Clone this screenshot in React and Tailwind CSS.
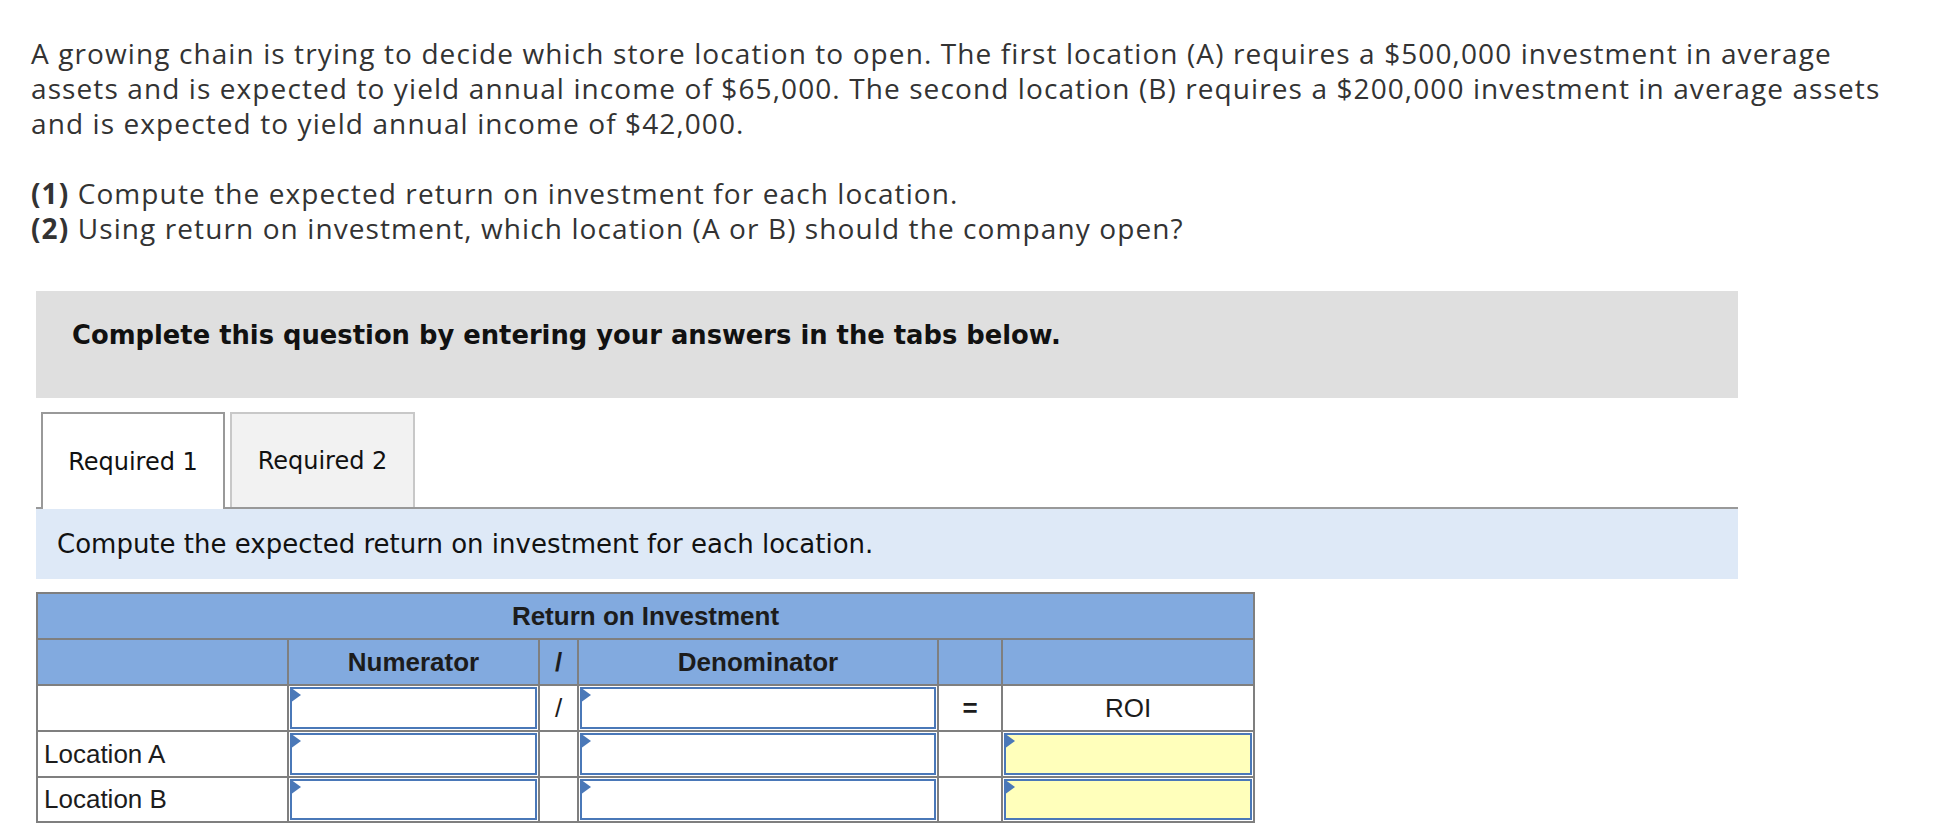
import React from 'react';

function InputBox({ yellow }) {
  return (
    <div className="h-full w-full bg-white p-[1px]">
      <div className={`relative h-full w-full border-2 border-[#4a78b8] ${yellow ? 'bg-[#ffffbb]' : 'bg-white'}`}>
        <div className="absolute -left-[2px] -top-[2px] h-0 w-0 border-y-[8px] border-l-[11px] border-y-transparent border-l-[#4a78b8]" />
      </div>
    </div>
  );
}

function Cell({ children, className = '' }) {
  return <div className={`flex items-center bg-white ${className}`}>{children}</div>;
}

function HeadCell({ children }) {
  return (
    <div className="flex items-center justify-center bg-[#82aadf] font-bold text-[#1c1c1c]">{children}</div>
  );
}

export default function App() {
  const rows = ['Location A', 'Location B'];

  return (
    <div className="min-h-screen bg-white pt-[36px] font-['Liberation_Sans',Arial,sans-serif]">
      <div className="pl-[31px] text-[28px] leading-[35px] tracking-[1.1px] text-[#333333] font-['Open_Sans','Liberation_Sans',sans-serif]">
        <p>
          A growing chain is trying to decide which store location to open. The first location (A) requires a $500,000 investment in average
          <br />
          assets and is expected to yield annual income of $65,000. The second location (B) requires a $200,000 investment in average assets
          <br />
          and is expected to yield annual income of $42,000.
        </p>
        <p className="mt-[35px]">
          <b>(1)</b> Compute the expected return on investment for each location.
          <br />
          <b>(2)</b> Using return on investment, which location (A or B) should the company open?
        </p>
      </div>

      <div className="ml-[36px] w-[1702px]">
        <div className="mt-[45px] h-[107px] bg-[#dfdfdf] pl-[36px] pt-[28px] font-['DejaVu_Sans',Verdana,sans-serif] text-[25.8px] font-bold leading-[32px] text-[#111]">
          Complete this question by entering your answers in the tabs below.
        </div>

        <div className="mt-[14px] flex items-end border-b-2 border-[#999999] pl-[5px] font-['DejaVu_Sans',Verdana,sans-serif] text-[24px] text-[#111]">
          <div className="-mb-[2px] flex h-[97px] w-[184px] items-center justify-center border-2 border-b-0 border-[#999999] bg-white">
            Required 1
          </div>
          <div className="ml-[5px] flex h-[95px] w-[185px] items-center justify-center border-2 border-b-0 border-[#c8c8c8] bg-[#f2f2f2]">
            Required 2
          </div>
        </div>

        <div className="flex h-[70px] items-center bg-[#dee9f7] pl-[21px] font-['DejaVu_Sans',Verdana,sans-serif] text-[26px] text-[#111]">
          Compute the expected return on investment for each location.
        </div>

        <div className="mt-[13px] grid w-[1219px] grid-cols-[249px_249px_37px_358px_62px_250px] grid-rows-[44px_44px_44px_44px_43px] gap-[2px] bg-[#7f7f7f] p-[2px] text-[26px] text-[#1c1c1c]">
          <div className="col-span-6 flex items-center justify-center bg-[#82aadf] font-bold text-[#1c1c1c]">
            Return on Investment
          </div>

          <div className="bg-[#82aadf]" />
          <HeadCell>Numerator</HeadCell>
          <HeadCell>/</HeadCell>
          <HeadCell>Denominator</HeadCell>
          <div className="bg-[#82aadf]" />
          <div className="bg-[#82aadf]" />

          <Cell />
          <InputBox />
          <Cell className="justify-center">/</Cell>
          <InputBox />
          <Cell className="justify-center font-bold">=</Cell>
          <Cell className="justify-center">ROI</Cell>

          {rows.map(r => (
            <React.Fragment key={r}>
              <Cell className="pl-[6px]">{r}</Cell>
              <InputBox />
              <Cell />
              <InputBox />
              <Cell />
              <InputBox yellow />
            </React.Fragment>
          ))}
        </div>
      </div>
    </div>
  );
}
